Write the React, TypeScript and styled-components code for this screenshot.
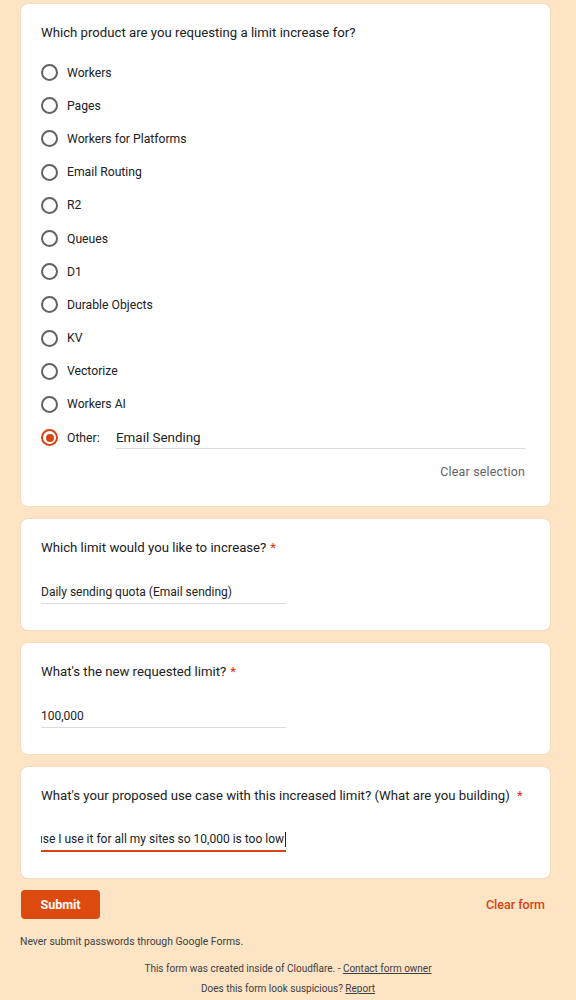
import React, { useState } from 'react';
import styled, { createGlobalStyle } from 'styled-components';

const GlobalStyle = createGlobalStyle`
  html, body {
    margin: 0;
    padding: 0;
    background: #fde4c4;
  }
  body {
    font-family: Roboto, "Liberation Sans", Arial, sans-serif;
    color: #202124;
  }
`;

const Page = styled.div`
  width: 576px;
  padding: 3px 0 0;
  box-sizing: border-box;
`;

const Column = styled.div`
  margin: 0 25px 0 20px;
  display: flex;
  flex-direction: column;
  gap: 11px;
`;

const Card = styled.div<{ $bottom?: number }>`
  background: #fff;
  border-radius: 8px;
  border: 1px solid #f4dcc0;
  padding: 19px 25px ${(p) => p.$bottom ?? 26}px 20px;
`;

const Title = styled.div`
  font-size: 13.2px;
  line-height: 20px;
  color: #202124;
  white-space: nowrap;
`;

const Star = styled.span`
  color: #d93025;
  margin-left: 4px;
`;

const Options = styled.div`
  margin-top: 13px;
  display: flex;
  flex-direction: column;
`;

const Option = styled.label`
  height: 33.2px;
  display: flex;
  align-items: center;
  font-size: 12.2px;
  color: #202124;
  cursor: pointer;
`;

const Radio = styled.span<{ $checked?: boolean }>`
  width: 17px;
  height: 17px;
  box-sizing: border-box;
  border-radius: 50%;
  border: 2px solid ${(p) => (p.$checked ? '#d84315' : '#5f6368')};
  margin-right: 9px;
  flex: 0 0 auto;
  display: flex;
  align-items: center;
  justify-content: center;
  &::after {
    content: '';
    display: ${(p) => (p.$checked ? 'block' : 'none')};
    width: 8px;
    height: 8px;
    border-radius: 50%;
    background: #d84315;
  }
`;

const OtherLabel = styled.span`
  width: 49px;
`;

const OtherInput = styled.div`
  flex: 1;
  height: 20px;
  margin-top: 1px;
  display: flex;
  align-items: center;
  font-size: 13.4px;
  color: #202124;
  border-bottom: 1px solid #dadce0;
`;

const ClearRow = styled.div`
  display: flex;
  justify-content: flex-end;
  margin-top: 8px;
`;

const ClearSelection = styled.button`
  background: none;
  border: none;
  padding: 0;
  font-family: inherit;
  font-size: 12.4px;
  line-height: 20px;
  letter-spacing: 0.2px;
  color: #5f6368;
  cursor: pointer;
`;

const TextField = styled.div<{ $active?: boolean }>`
  box-sizing: border-box;
  width: 245px;
  height: 24px;
  margin-top: 22px;
  display: flex;
  align-items: center;
  justify-content: ${(p) => (p.$active ? 'flex-end' : 'flex-start')};
  font-size: 12px;
  color: #202124;
  white-space: nowrap;
  overflow: hidden;
  border-bottom: ${(p) => (p.$active ? '2px solid #d84315' : '1px solid #dadce0')};
`;

const Caret = styled.span`
  display: inline-block;
  flex: 0 0 auto;
  width: 1px;
  height: 15px;
  background: #202124;
  margin-left: 1px;
`;

const Actions = styled.div`
  display: flex;
  justify-content: space-between;
  align-items: center;
  margin: 11px 31px 0 21px;
`;

const SubmitButton = styled.button`
  width: 79px;
  height: 29px;
  border: none;
  border-radius: 4px;
  background: #dc4a0f;
  color: #fff;
  font-family: inherit;
  font-size: 12.5px;
  font-weight: 700;
  cursor: pointer;
`;

const ClearForm = styled.button`
  background: none;
  border: none;
  padding: 0;
  font-family: inherit;
  font-size: 12.5px;
  font-weight: 500;
  color: #d84315;
  cursor: pointer;
`;

const Notice = styled.div`
  margin: 16px 0 0 20px;
  font-size: 10.4px;
  color: #3c4043;
`;

const FooterLine = styled.div<{ $gap: number }>`
  margin-top: ${(p) => p.$gap}px;
  text-align: center;
  font-size: 10px;
  color: #3c4043;
  a {
    color: #3c4043;
    text-decoration: underline;
  }
`;

const products = [
  'Workers',
  'Pages',
  'Workers for Platforms',
  'Email Routing',
  'R2',
  'Queues',
  'D1',
  'Durable Objects',
  'KV',
  'Vectorize',
  'Workers AI',
];

export default function App() {
  const [selected, setSelected] = useState<string>('other');

  return (
    <Page>
      <GlobalStyle />
      <Column>
        <Card $bottom={24}>
          <Title>Which product are you requesting a limit increase for?</Title>
          <Options>
            {products.map((name) => (
              <Option key={name} onClick={() => setSelected(name)}>
                <Radio $checked={selected === name} />
                {name}
              </Option>
            ))}
            <Option onClick={() => setSelected('other')}>
              <Radio $checked={selected === 'other'} />
              <OtherLabel>Other:</OtherLabel>
              <OtherInput>Email Sending</OtherInput>
            </Option>
          </Options>
          <ClearRow>
            <ClearSelection onClick={() => setSelected('')}>Clear selection</ClearSelection>
          </ClearRow>
        </Card>

        <Card>
          <Title>
            Which limit would you like to increase?<Star>*</Star>
          </Title>
          <TextField>Daily sending quota (Email sending)</TextField>
        </Card>

        <Card>
          <Title>
            What's the new requested limit?<Star>*</Star>
          </Title>
          <TextField>100,000</TextField>
        </Card>

        <Card>
          <Title>
            What's your proposed use case with this increased limit? (What are you building)<Star>&nbsp;*</Star>
          </Title>
          <TextField $active>
            <span>I need it because I use it for all my sites so 10,000 is too low</span>
            <Caret />
          </TextField>
        </Card>
      </Column>

      <Actions>
        <SubmitButton>Submit</SubmitButton>
        <ClearForm>Clear form</ClearForm>
      </Actions>

      <Notice>Never submit passwords through Google Forms.</Notice>
      <FooterLine $gap={15}>
        This form was created inside of Cloudflare. - <a href="#">Contact form owner</a>
      </FooterLine>
      <FooterLine $gap={9}>
        Does this form look suspicious? <a href="#">Report</a>
      </FooterLine>
    </Page>
  );
}
